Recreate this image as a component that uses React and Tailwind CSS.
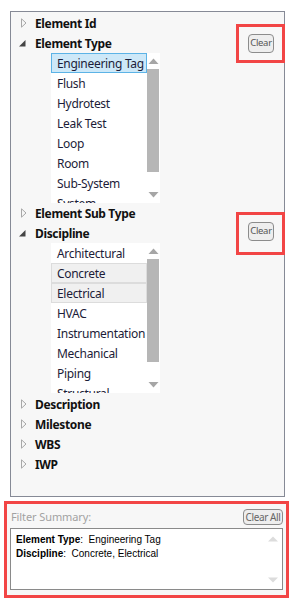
const font = { fontFamily: '"Segoe UI", "Noto Sans", "Open Sans", sans-serif' };

function Collapsed() {
  return (
    <svg width="6" height="10" viewBox="0 0 6 10" className="shrink-0">
      <path d="M0.5 0.8 L5 5 L0.5 9.2 Z" fill="none" stroke="#a8a8a8" strokeWidth="1" />
    </svg>
  );
}

function Expanded() {
  return (
    <svg width="7" height="7" viewBox="0 0 7 7" className="shrink-0">
      <path d="M6.5 0 L6.5 6.5 L0 6.5 Z" fill="#454545" />
    </svg>
  );
}

function Header({ open, label }) {
  return (
    <div className="flex h-[20px] items-center">
      <div className={"flex w-[24px] items-center " + (open ? "pl-[8px]" : "pl-[10px]")}>
        {open ? <Expanded /> : <Collapsed />}
      </div>
      <span className="pt-[1px] text-[12px] font-bold text-[#111] leading-none tracking-[-0.35px] whitespace-nowrap">
        {label}
      </span>
    </div>
  );
}

function ClearButton() {
  return (
    <button className="flex h-[19px] w-[26px] items-center justify-center rounded-[4px] border border-[#8c8c8c] bg-[#eeeeee] text-[9.5px] text-[#555] tracking-[-0.3px]">
      Clear
    </button>
  );
}

function Scrollbar({ thumbTop, thumbHeight }) {
  return (
    <div className="w-[13px] shrink-0 bg-white">
      <svg width="13" height="150" viewBox="0 0 13 150" className="block">
        <path d="M1.5 11 L6.5 5.5 L11.5 11 Z" fill="#a6a6a6" />
        <rect x="0" y={thumbTop} width="12" height={thumbHeight} fill="#b6b6b6" />
        <path d="M1.5 139 L6.5 144.5 L11.5 139 Z" fill="#a6a6a6" />
      </svg>
    </div>
  );
}

function ListBox({ items, selected, active }) {
  return (
    <div className="ml-[40px] flex h-[150px] w-[109px] overflow-hidden bg-white">
      <div className="w-[96px] shrink-0 overflow-hidden">
        {items.map((it) => {
          const sel = selected.includes(it);
          return (
            <div
              key={it}
              className={
                "flex h-[20px] items-center border pl-[5px] pt-[1px] text-[12px] text-[#1c1c38] whitespace-nowrap tracking-[-0.3px] " +
                (sel
                  ? active
                    ? "border-[#5cb3e6] bg-[#cde8f8]"
                    : "border-[#dcdcdc] bg-[#f0f0f0]"
                  : "border-transparent")
              }
            >
              {it}
            </div>
          );
        })}
      </div>
      <Scrollbar thumbTop={16} thumbHeight={103} />
    </div>
  );
}

export default function App() {
  return (
    <div className="relative h-[598px] w-[293px] overflow-hidden bg-white" style={font}>
      <div className="pt-[11px] pl-[10px]">
        <div className="relative h-[486px] w-[275px] border border-[#868a96] bg-[#f7f7f7] pt-[1px]">
          <Header label="Element Id" />
          <div className="flex items-start justify-between">
            <Header open label="Element Type" />
            <div className="mt-[1px] mr-[10px]">
              <ClearButton />
            </div>
          </div>
          <ListBox
            items={["Engineering Tag", "Flush", "Hydrotest", "Leak Test", "Loop", "Room", "Sub-System", "System"]}
            selected={["Engineering Tag"]}
            active
          />
          <Header label="Element Sub Type" />
          <div className="flex items-start justify-between">
            <Header open label="Discipline" />
            <div className="mt-[-1px] mr-[10px]">
              <ClearButton />
            </div>
          </div>
          <ListBox
            items={["Architectural", "Concrete", "Electrical", "HVAC", "Instrumentation", "Mechanical", "Piping", "Structural"]}
            selected={["Concrete", "Electrical"]}
          />
          <div className="pt-[1px]">
            <Header label="Description" />
            <Header label="Milestone" />
            <Header label="WBS" />
            <Header label="IWP" />
          </div>
        </div>
      </div>

      <div className="mx-[4px] mt-[4px] h-[97px] border-[3px] border-[#f24545] bg-[#f7f7f7] px-[3px] pt-[4px]">
        <div className="flex h-[18px] items-center justify-between">
          <span className="pl-[1px] text-[11px] text-[#a2a2a2] tracking-[-0.1px]">Filter Summary:</span>
          <button className="flex h-[16px] w-[40px] items-center justify-center rounded-[4px] border border-[#8c8c8c] bg-[#eeeeee] text-[10px] text-[#666] tracking-[-0.4px]">
            Clear All
          </button>
        </div>
        <div
          className="relative mt-[2px] h-[62px] border border-[#8a8a8a] bg-white px-[5px] pt-[4px] text-[10px] leading-[14px] text-black"
          style={{ fontFamily: '"Liberation Sans", Arial, sans-serif' }}
        >
          <div>
            <b>Element Type</b>:&nbsp; Engineering Tag
          </div>
          <div>
            <b>Discipline</b>:&nbsp; Concrete, Electrical
          </div>
          <svg width="12" height="6" viewBox="0 0 12 6" className="absolute right-[3px] top-[7px]">
            <path d="M1 5.5 L6 0.5 L11 5.5 Z" fill="#dcdcdc" />
          </svg>
          <svg width="12" height="6" viewBox="0 0 12 6" className="absolute right-[3px] bottom-[6px]">
            <path d="M1 0.5 L6 5.5 L11 0.5 Z" fill="#dcdcdc" />
          </svg>
        </div>
      </div>

      <div className="pointer-events-none absolute left-[236px] top-[24px] h-[39px] w-[49px] border-[3px] border-[#f24545]" />
      <div className="pointer-events-none absolute left-[236px] top-[212px] h-[43px] w-[49px] border-[3px] border-[#f24545]" />
    </div>
  );
}
